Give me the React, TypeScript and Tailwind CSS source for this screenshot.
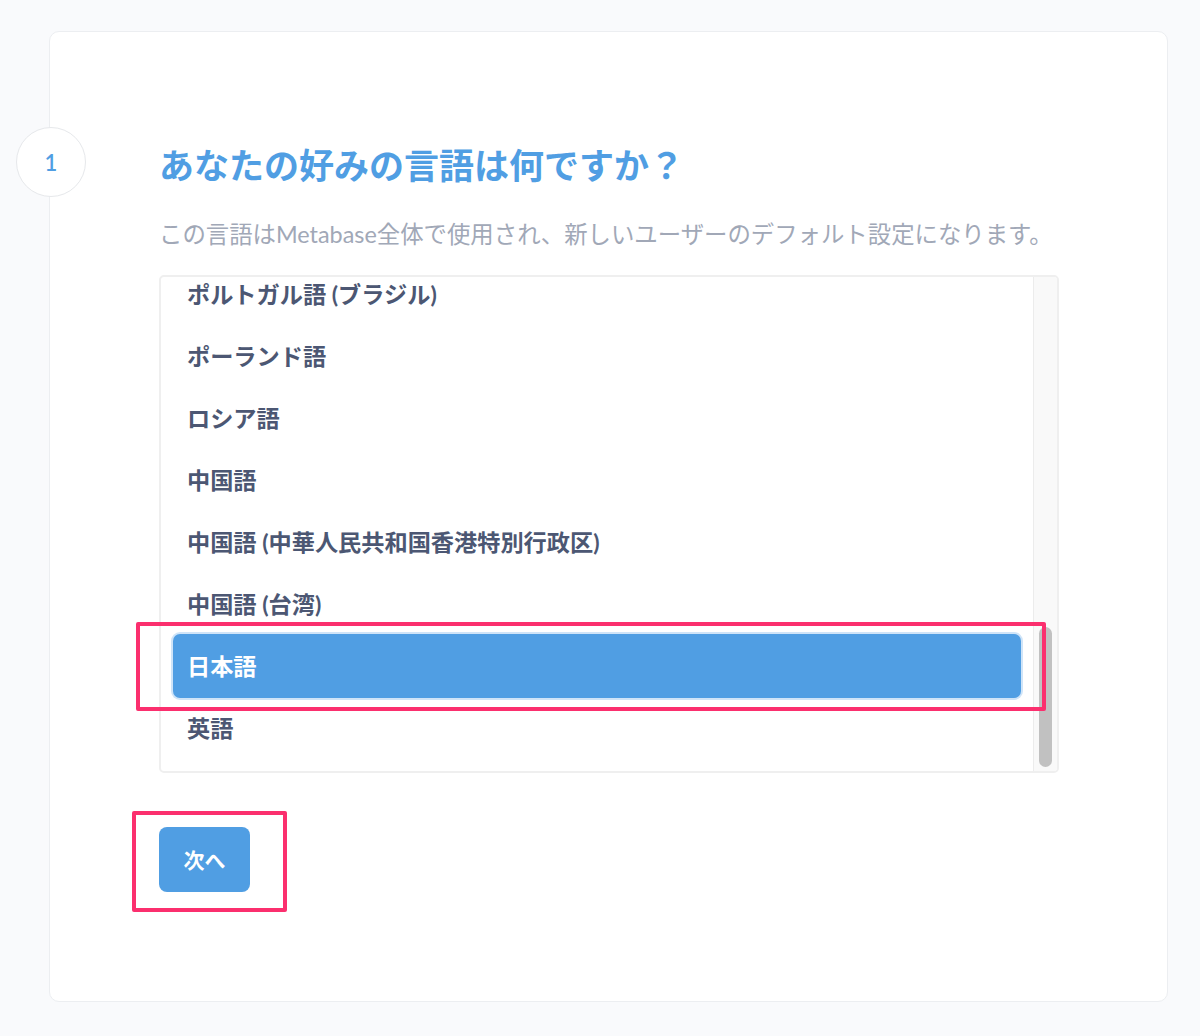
import React from "react";

const FONT = "font-['Lato','Noto_Sans_CJK_JP',sans-serif]";

const LANGUAGES = [
  "ポルトガル語 (ブラジル)",
  "ポーランド語",
  "ロシア語",
  "中国語",
  "中国語 (中華人民共和国香港特別行政区)",
  "中国語 (台湾)",
  "日本語",
  "英語",
];

const SELECTED = "日本語";

export default function App() {
  return (
    <div className={`min-h-[1036px] w-full bg-[#f9fafc] pt-[31px] pl-[49px] ${FONT}`}>
      <div className="relative w-[1119px] h-[971px] rounded-[10px] border border-[#eceef1] bg-white">
        {/* step marker */}
        <div className="absolute left-[-34px] top-[95px] w-[70px] h-[70px] rounded-full border border-[#e6e8eb] bg-white flex items-center justify-center text-[22px] font-semibold text-[#509ee3]">
          1
        </div>

        <div className="pl-[109px] pt-[110px]">
          <h1 className="text-[35px] leading-[46px] font-bold text-[#509ee3]">
            あなたの好みの言語は何ですか？
          </h1>
          <p className="mt-[31px] text-[23.4px] leading-[30px] text-[#a1a8b7]">
            この言語はMetabase全体で使用され、新しいユーザーのデフォルト設定になります。
          </p>

          <LanguageList />

          <button
            type="button"
            className="mt-[54px] w-[91px] h-[65px] rounded-[8px] bg-[#509ee3] text-white text-[21px] font-semibold flex items-center justify-center"
          >
            次へ
          </button>
        </div>

        {/* annotation boxes */}
        <div className="absolute left-[86px] top-[590px] w-[910px] h-[89px] border-[4px] border-[#fb2f6e] rounded-[2px] pointer-events-none" />
        <div className="absolute left-[82px] top-[779px] w-[155px] h-[101px] border-[4px] border-[#fb2f6e] rounded-[2px] pointer-events-none" />
      </div>
    </div>
  );
}

function LanguageList() {
  return (
    <div className="mt-[26px] w-[900px] h-[498px] rounded-[5px] border-2 border-[#efefef] flex overflow-hidden">
      <div className="flex-1 overflow-hidden px-[12px]">
        <div className="-mt-[14px] flex flex-col">
          {LANGUAGES.map((lang) => (
            <LanguageRow key={lang} label={lang} active={lang === SELECTED} />
          ))}
        </div>
      </div>
      {/* scrollbar */}
      <div className="w-[24px] bg-[#f9f9f9] border-l border-[#ececec] flex flex-col justify-end pb-[4px] items-center">
        <div className="w-[13px] h-[140px] rounded-full bg-[#c1c1c1]" />
      </div>
    </div>
  );
}

function LanguageRow({ label, active }: { label: string; active: boolean }) {
  if (active) {
    return (
      <div className="h-[62px] flex items-center">
        <div className="w-full h-[64px] rounded-[7px] bg-[#509ee3] ring-2 ring-[#cfe4f8] flex items-center pl-[14px] text-[23.2px] font-bold text-white">
          {label}
        </div>
      </div>
    );
  }
  return (
    <div className="h-[62px] flex items-center pl-[14px] text-[23.2px] font-bold text-[#4c5773]">
      {label}
    </div>
  );
}
